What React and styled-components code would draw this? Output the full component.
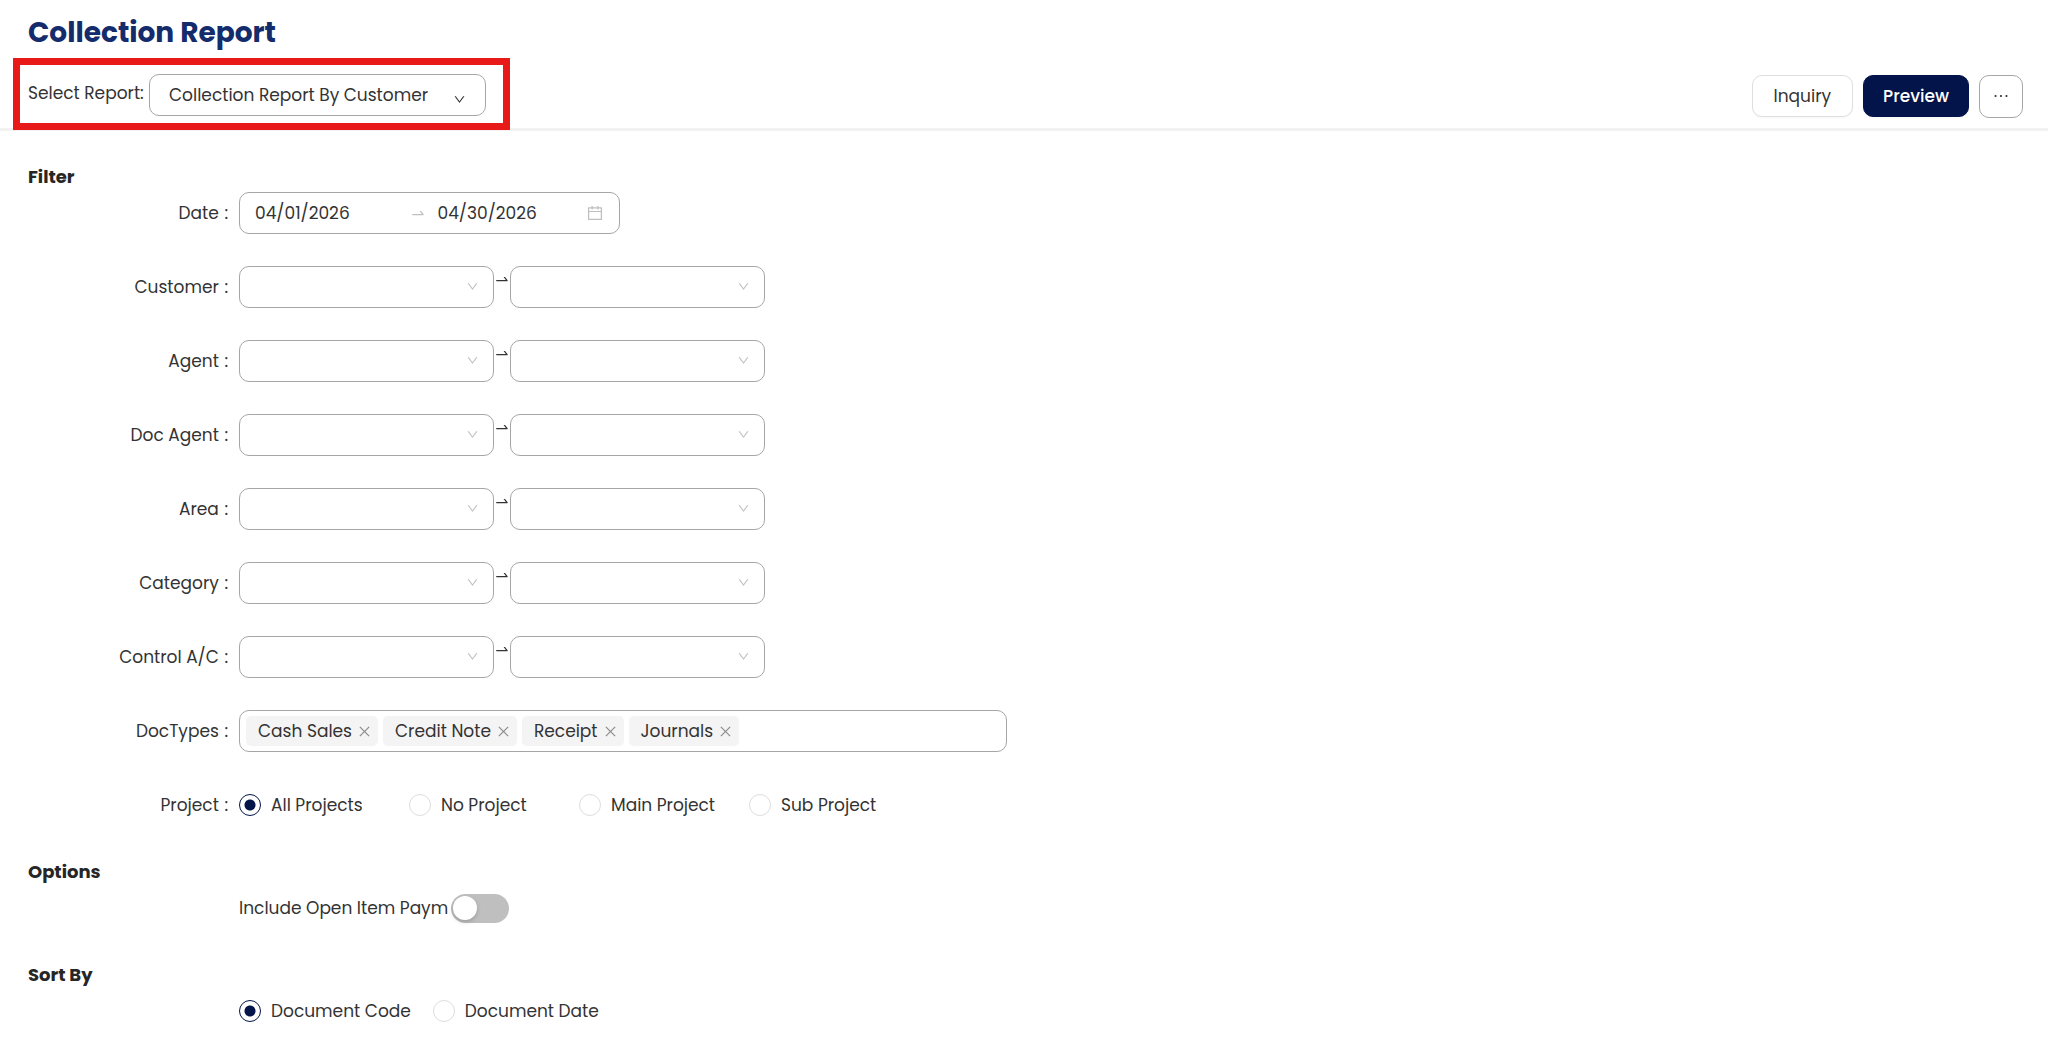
import { useState } from "react";
import {
  AiOutlineCalendar,
  AiOutlineClose,
  AiOutlineDown,
  AiOutlineEllipsis,
  AiOutlineSwapRight,
} from "react-icons/ai";
import styled, { createGlobalStyle } from "styled-components";

const GlobalStyle = createGlobalStyle`
  * {
    box-sizing: border-box;
  }
  body {
    margin: 0;
    background: #fff;
    color: #333;
    font-family: Poppins, Inter, sans-serif;
    font-size: 17px;
    line-height: 24px;
  }
  button, input, select {
    margin: 0;
    color: inherit;
    font: inherit;
  }
`;

const Header = styled.header`
  padding-top: 13px;
  border-bottom: 3px solid #f2f2f2;
`;
const Title = styled.h1`
  margin: 0;
  padding-left: 28px;
  color: #142c6c;
  font-size: 28px;
  font-weight: 700;
  line-height: 40px;
`;
const Toolbar = styled.div`
  display: flex;
  align-items: center;
  justify-content: space-between;
  padding: 5px 25px 0 13px;
`;
const ReportPicker = styled.div`
  display: flex;
  align-items: center;
  gap: 4px;
  margin-bottom: -2px;
  padding: 9px 17px 7px 8px;
  border: 7px solid #e81919;
`;
const PickerLabel = styled.label`
  width: 117px;
  padding-bottom: 4px;
  white-space: nowrap;
`;
const Actions = styled.div`
  display: flex;
  align-items: center;
  gap: 10px;
  padding-top: 6px;
`;
const Button = styled.button`
  height: 42px;
  padding: 0 ${(props) => (props.$primary ? "19px" : "21px")};
  border: 1px solid ${(props) => (props.$primary ? "#03144a" : "#dedede")};
  border-radius: 10px;
  background: ${(props) => (props.$primary ? "#03144a" : "#fff")};
  color: ${(props) => (props.$primary ? "#fff" : "#333")};
  font-weight: ${(props) => (props.$primary ? 500 : 400)};
  box-shadow: 0 2px 1px rgba(0, 0, 0, 0.02);
`;
const MoreButton = styled.button`
  display: flex;
  align-items: center;
  justify-content: center;
  width: 44px;
  height: 43px;
  padding: 0;
  border: 1px solid #a6a6a6;
  border-radius: 10px;
  background: #fff;
  font-size: 20px;
`;

const Section = styled.section`
  padding-top: 34px;
`;
const Heading = styled.h2`
  margin: 0 0 3px;
  padding-left: 28px;
  color: #262626;
  font-size: 18px;
  font-weight: 700;
  line-height: 24px;
`;
const Rows = styled.div`
  display: grid;
  gap: 32px;
`;
const Row = styled.div`
  display: grid;
  grid-template-columns: 228px minmax(0, 1fr);
  column-gap: 11px;
  align-items: center;
  min-height: 42px;
`;
const RowLabel = styled.label`
  text-align: right;
`;
const Colon = styled.span`
  margin-left: 1px;
`;
const Field = styled.div`
  grid-column: 2;
  display: flex;
  align-items: center;
`;

const SelectWrap = styled.div`
  position: relative;
  width: ${(props) => (props.$wide ? "337px" : "255px")};
`;
const Select = styled.select`
  display: block;
  width: 100%;
  height: 42px;
  padding: 0 36px 0 19px;
  border: 1px solid #a6a6a6;
  border-radius: 10px;
  background: #fff;
  appearance: none;
`;
const SelectIcon = styled(AiOutlineDown)`
  position: absolute;
  top: ${(props) => (props.$dark ? "19px" : "14px")};
  right: ${(props) => (props.$dark ? "20px" : "15px")};
  color: ${(props) => (props.$dark ? "#333" : "#bfbfbf")};
  font-size: 13px;
  pointer-events: none;
`;
const RangeArrow = styled(AiOutlineSwapRight)`
  flex: none;
  align-self: flex-start;
  height: 26px;
`;

const DateRange = styled.div`
  display: flex;
  align-items: center;
  width: 381px;
  height: 42px;
  padding: 0 15px;
  border: 1px solid #a6a6a6;
  border-radius: 10px;

  svg {
    flex: none;
    color: #bfbfbf;
  }
`;
const DateInput = styled.input`
  flex: 1;
  min-width: 0;
  padding: 0;
  border: 0;
  background: none;
  outline: none;
`;
const DateArrow = styled(AiOutlineSwapRight)`
  margin: 0 12px 0 6px;
`;

const TagBox = styled.div`
  display: flex;
  align-items: center;
  gap: 5px;
  flex: 0 1 768px;
  height: 42px;
  padding: 0 6px;
  border: 1px solid #a6a6a6;
  border-radius: 10px;
`;
const Tag = styled.span`
  display: flex;
  align-items: center;
  gap: 5px;
  height: 30px;
  padding: 0 6px 0 12px;
  border-radius: 5px;
  background: #f4f4f4;
  white-space: nowrap;
`;
const TagRemove = styled.button`
  display: flex;
  padding: 0;
  border: 0;
  background: none;
  color: #8c8c8c;
  font-size: 15px;
`;

const RadioGroup = styled.div`
  grid-column: 2;
  display: grid;
  grid-auto-flow: column;
  grid-auto-columns: ${(props) => (props.$even ? "170px" : "max-content")};
  column-gap: ${(props) => (props.$even ? "0" : "22px")};
  justify-content: start;
`;
const RadioLabel = styled.label`
  display: flex;
  align-items: center;
  gap: 10px;
`;
const Radio = styled.input`
  width: 22px;
  height: 22px;
  border: 1px solid #dedede;
  border-radius: 50%;
  background: #fff;
  appearance: none;

  &:checked {
    border-color: #03144a;
    background: radial-gradient(circle, #03144a 5px, #fff 6px);
  }
`;

const SwitchLabel = styled.label`
  width: 212px;
  overflow: hidden;
  white-space: nowrap;
`;
const Switch = styled.input`
  display: flex;
  align-items: center;
  width: 58px;
  height: 29px;
  padding: 0 2px;
  border-radius: 15px;
  background: ${(props) => (props.checked ? "#03144a" : "#bfbfbf")};
  appearance: none;

  &::before {
    content: "";
    width: 24px;
    height: 24px;
    margin-left: ${(props) => (props.checked ? "30px" : "0")};
    border-radius: 50%;
    background: #fff;
    box-shadow: 0 2px 4px rgba(0, 35, 11, 0.2);
  }
`;

const ranges = ["Customer", "Agent", "Doc Agent", "Area", "Category", "Control A/C"];
const projects = ["All Projects", "No Project", "Main Project", "Sub Project"];
const sorts = ["Document Code", "Document Date"];

const RangeRow = ({ name }) => (
  <Row>
    <RowLabel htmlFor={name}>
      {name} <Colon>:</Colon>
    </RowLabel>
    <Field>
      <SelectWrap>
        <Select id={name}>
          <option></option>
        </Select>
        <SelectIcon />
      </SelectWrap>
      <RangeArrow size={16} />
      <SelectWrap>
        <Select aria-label={`${name} to`}>
          <option></option>
        </Select>
        <SelectIcon />
      </SelectWrap>
    </Field>
  </Row>
);

const Radios = ({ name, items, value, onChange, even }) => (
  <RadioGroup role="radiogroup" aria-label={name} $even={even}>
    {items.map((el) => (
      <RadioLabel key={el}>
        <Radio type="radio" name={name} checked={value === el} onChange={() => onChange(el)} />
        {el}
      </RadioLabel>
    ))}
  </RadioGroup>
);

function App() {
  const [from, setFrom] = useState("04/01/2026");
  const [to, setTo] = useState("04/30/2026");
  const [docTypes, setDocTypes] = useState(["Cash Sales", "Credit Note", "Receipt", "Journals"]);
  const [project, setProject] = useState("All Projects");
  const [openItem, setOpenItem] = useState(false);
  const [sort, setSort] = useState("Document Code");

  return (
    <>
      <GlobalStyle />
      <Header>
        <Title>Collection Report</Title>
        <Toolbar>
          <ReportPicker>
            <PickerLabel htmlFor="report">Select Report:</PickerLabel>
            <SelectWrap $wide>
              <Select id="report">
                <option>Collection Report By Customer</option>
              </Select>
              <SelectIcon $dark />
            </SelectWrap>
          </ReportPicker>
          <Actions>
            <Button type="button">Inquiry</Button>
            <Button type="button" $primary>
              Preview
            </Button>
            <MoreButton type="button" aria-label="More">
              <AiOutlineEllipsis />
            </MoreButton>
          </Actions>
        </Toolbar>
      </Header>

      <main>
        <Section>
          <Heading>Filter</Heading>
          <Rows>
            <Row>
              <RowLabel htmlFor="from">
                Date <Colon>:</Colon>
              </RowLabel>
              <Field>
                <DateRange>
                  <DateInput id="from" value={from} onChange={(e) => setFrom(e.target.value)} />
                  <DateArrow size={16} />
                  <DateInput
                    aria-label="Date to"
                    value={to}
                    onChange={(e) => setTo(e.target.value)}
                  />
                  <AiOutlineCalendar size={18} />
                </DateRange>
              </Field>
            </Row>
            {ranges.map((el) => (
              <RangeRow key={el} name={el} />
            ))}
            <Row>
              <RowLabel as="span">
                DocTypes <Colon>:</Colon>
              </RowLabel>
              <Field>
                <TagBox>
                  {docTypes.map((el) => (
                    <Tag key={el}>
                      {el}
                      <TagRemove
                        type="button"
                        aria-label={`Remove ${el}`}
                        onClick={() => setDocTypes(docTypes.filter((type) => type !== el))}
                      >
                        <AiOutlineClose />
                      </TagRemove>
                    </Tag>
                  ))}
                </TagBox>
              </Field>
            </Row>
            <Row>
              <RowLabel as="span">
                Project <Colon>:</Colon>
              </RowLabel>
              <Radios name="Project" items={projects} value={project} onChange={setProject} even />
            </Row>
          </Rows>
        </Section>

        <Section>
          <Heading>Options</Heading>
          <Row>
            <Field>
              <SwitchLabel htmlFor="openItem">Include Open Item Paym</SwitchLabel>
              <Switch
                id="openItem"
                type="checkbox"
                role="switch"
                checked={openItem}
                onChange={() => setOpenItem(!openItem)}
              />
            </Field>
          </Row>
        </Section>

        <Section>
          <Heading>Sort By</Heading>
          <Row>
            <Radios name="Sort By" items={sorts} value={sort} onChange={setSort} />
          </Row>
        </Section>
      </main>
    </>
  );
}

export default App;
